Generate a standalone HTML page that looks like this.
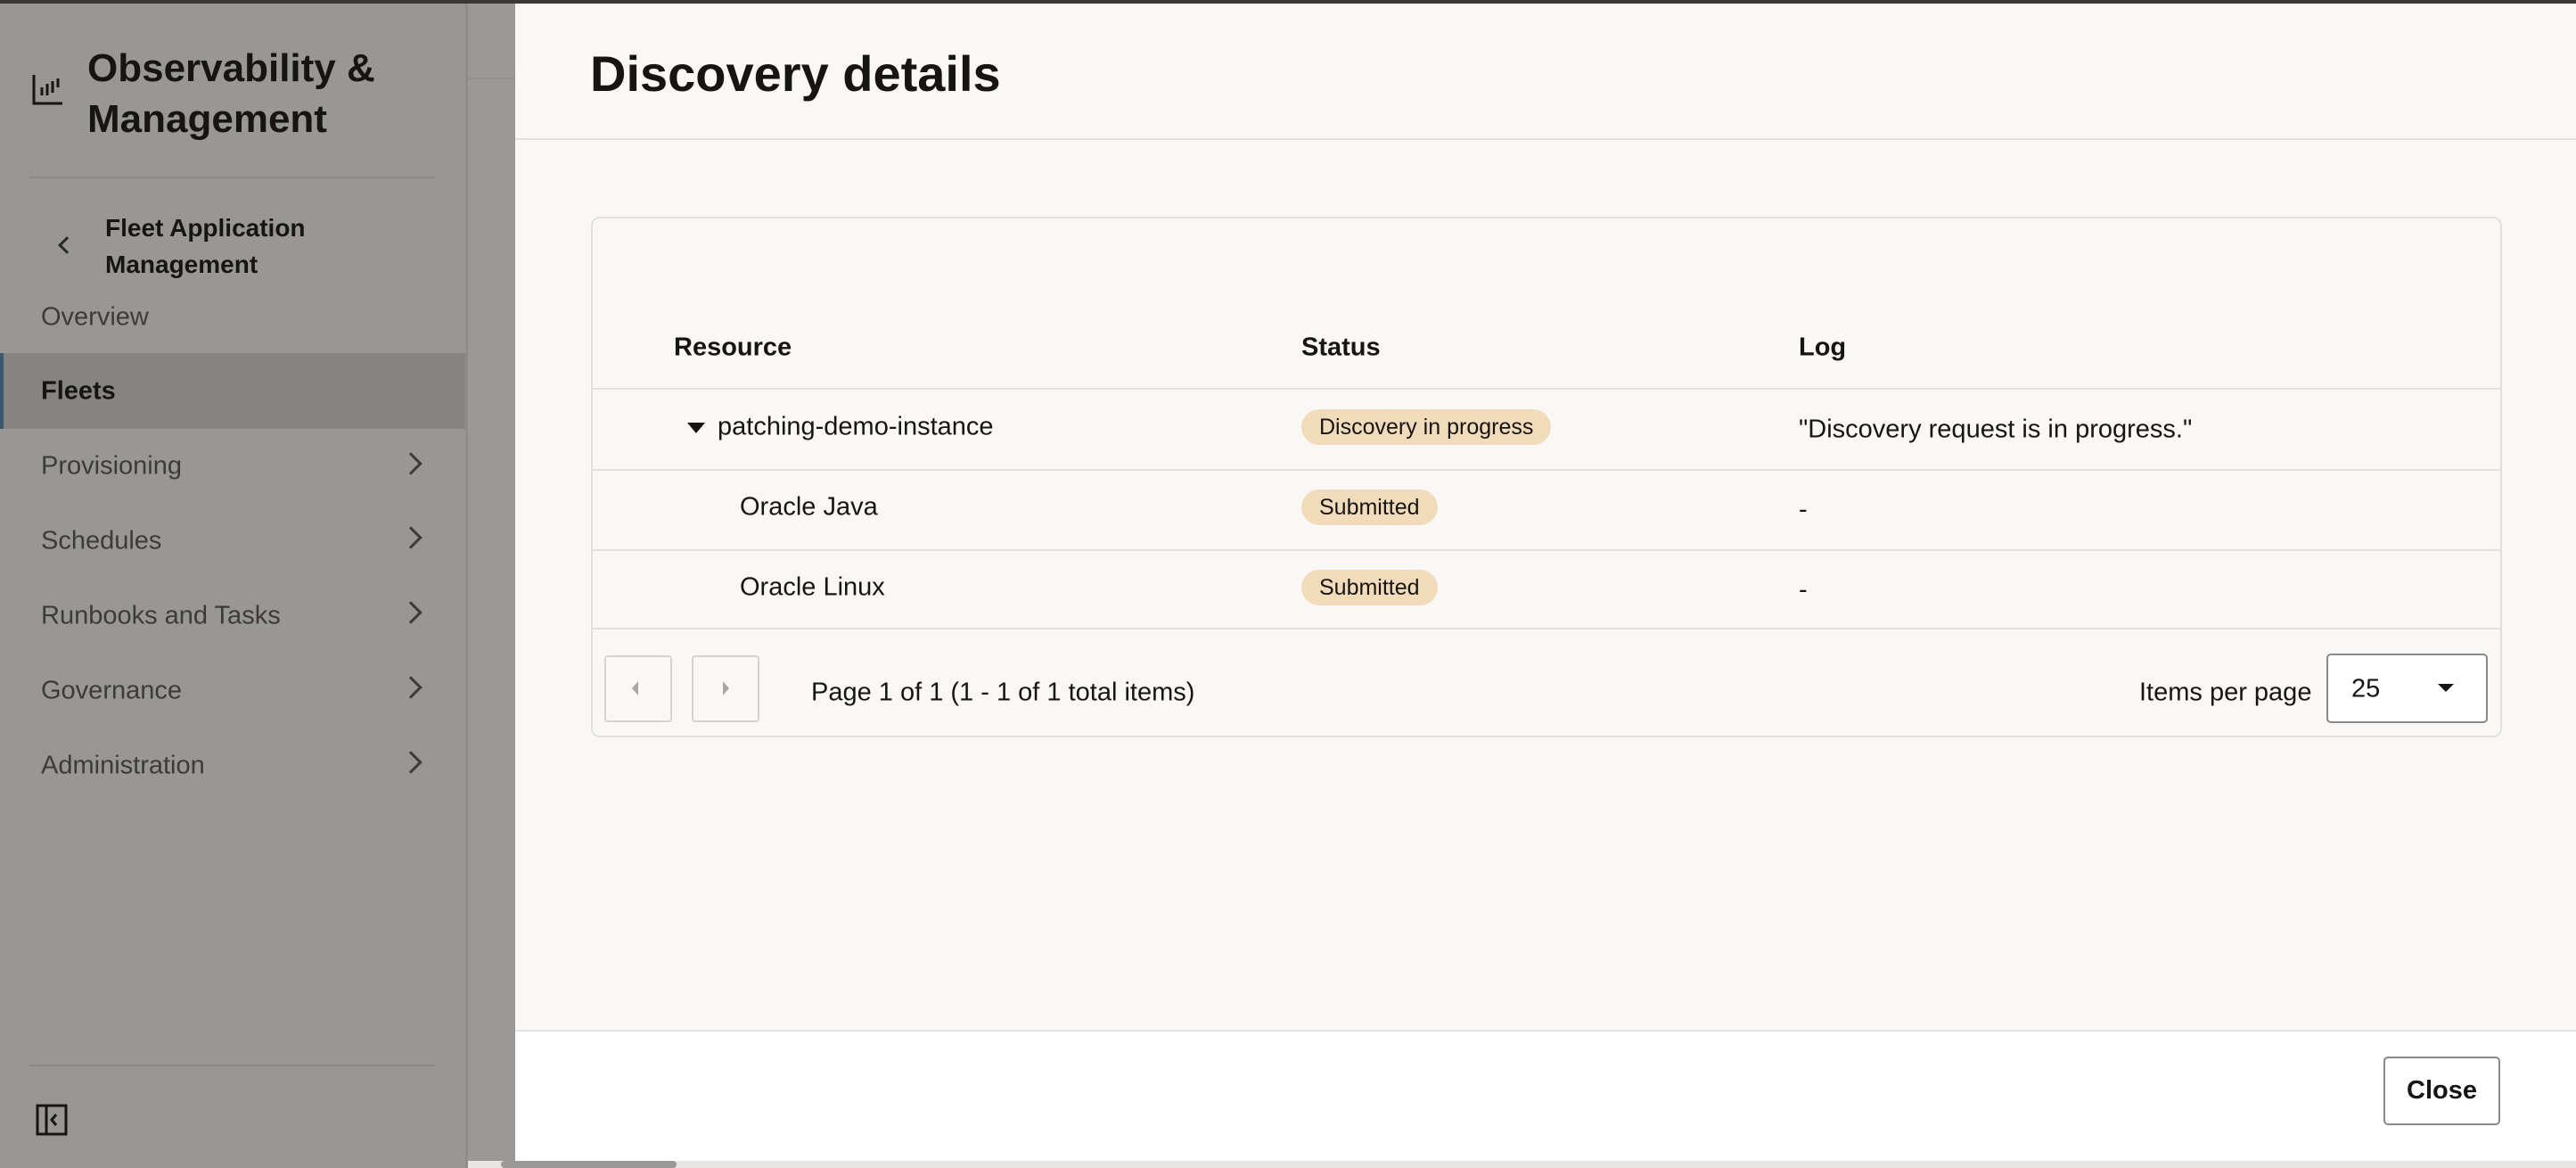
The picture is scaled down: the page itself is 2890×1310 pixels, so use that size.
<!DOCTYPE html>
<html><head><meta charset="utf-8"><style>
*{box-sizing:border-box;margin:0;padding:0}
body{width:2890px;height:1310px;position:relative;overflow:hidden;background:#f9f8f6;font-family:"Liberation Sans",sans-serif;color:#161513}
.a{position:absolute;white-space:nowrap}
.side{left:0;top:0;width:525px;height:1310px;background:#989795;border-right:3px solid #8e8d8b}
.strip{left:525px;top:0;width:53px;height:1310px;background:#9a9997}
.nav{left:46px;font-size:29px;color:#3c3b39;transform:translateY(-50%)}
.chev{left:452px;width:18px;height:18px;border-right:3px solid #3c3b39;border-top:3px solid #3c3b39;transform:translateY(-50%) rotate(45deg)}
.td{font-size:29px;transform:translateY(-50%)}
.badge{background:#f2dbbb;border-radius:20px;height:40px;line-height:40px;padding:0 20px;font-size:25px;transform:translateY(-50%)}
.hl{height:2px;background:#e2e1df;left:663px;width:2144px}
</style></head><body>
<div class="a" style="left:0;top:0;width:2890px;height:4px;background:#3a3935;z-index:5"></div>
<div class="a side"></div>
<div class="a strip"></div>
<div class="a" style="left:525px;top:87px;width:53px;height:2px;background:#8f8e8c"></div>
<!-- sidebar -->
<svg class="a" style="left:36px;top:82px" width="36" height="36" viewBox="0 0 36 36"><path d="M2 2V34H34" fill="none" stroke="#161513" stroke-width="3"/><path d="M11 16v9M17 12v13M23 9v13M29 6v10" stroke="#161513" stroke-width="3"/></svg>
<div class="a" style="left:98px;top:48px;font-size:44px;font-weight:bold;line-height:57px">Observability &amp;<br>Management</div>
<div class="a" style="left:33px;top:198px;width:455px;height:2px;background:#8a8987"></div>
<div class="a" style="left:68px;top:268px;width:14px;height:14px;border-left:3px solid #2a2927;border-bottom:3px solid #2a2927;transform:rotate(45deg)"></div>
<div class="a" style="left:118px;top:235px;font-size:28px;font-weight:bold;line-height:41px">Fleet Application<br>Management</div>
<div class="a nav" style="top:356px">Overview</div>
<div class="a" style="left:0;top:396px;width:522px;height:85px;background:#858482;border-left:4px solid #3a5a70"></div>
<div class="a nav" style="top:439px;font-weight:bold;color:#161513">Fleets</div>
<div class="a nav" style="top:523px">Provisioning</div><div class="a chev" style="top:520px"></div>
<div class="a nav" style="top:607px">Schedules</div><div class="a chev" style="top:603px"></div>
<div class="a nav" style="top:691px">Runbooks and Tasks</div><div class="a chev" style="top:687px"></div>
<div class="a nav" style="top:775px">Governance</div><div class="a chev" style="top:771px"></div>
<div class="a nav" style="top:859px">Administration</div><div class="a chev" style="top:855px"></div>
<div class="a" style="left:33px;top:1194px;width:455px;height:2px;background:#8a8987"></div>
<svg class="a" style="left:40px;top:1238px" width="36" height="36" viewBox="0 0 36 36"><rect x="2" y="2" width="32" height="32" fill="none" stroke="#161513" stroke-width="3"/><path d="M12 2v32" stroke="#161513" stroke-width="3"/><path d="M23 12l-5 6 5 6" fill="none" stroke="#161513" stroke-width="3"/></svg>
<!-- modal -->
<div class="a" style="left:578px;top:0;width:2312px;height:157px;background:#f9f8f6;border-bottom:2px solid #e2e1df"></div>
<div class="a" style="left:662px;top:50px;font-size:56px;font-weight:bold">Discovery details</div>
<div class="a" style="left:663px;top:243px;width:2144px;height:584px;border:2px solid #e2e1df;border-radius:10px"></div>
<div class="a td" style="left:756px;top:390px;font-weight:bold">Resource</div>
<div class="a td" style="left:1460px;top:390px;font-weight:bold">Status</div>
<div class="a td" style="left:2018px;top:390px;font-weight:bold">Log</div>
<div class="a hl" style="top:435px"></div>
<div class="a" style="left:771px;top:474px;width:0;height:0;border-left:10px solid transparent;border-right:10px solid transparent;border-top:12px solid #161513"></div>
<div class="a td" style="left:805px;top:479px">patching-demo-instance</div>
<div class="a badge" style="left:1460px;top:479px">Discovery in progress</div>
<div class="a td" style="left:2018px;top:482px">"Discovery request is in progress."</div>
<div class="a hl" style="top:526px"></div>
<div class="a td" style="left:830px;top:569px">Oracle Java</div>
<div class="a badge" style="left:1460px;top:569px">Submitted</div>
<div class="a td" style="left:2018px;top:572px">-</div>
<div class="a hl" style="top:616px"></div>
<div class="a td" style="left:830px;top:659px">Oracle Linux</div>
<div class="a badge" style="left:1460px;top:659px">Submitted</div>
<div class="a td" style="left:2018px;top:662px">-</div>
<div class="a hl" style="top:704px"></div>
<div class="a" style="left:678px;top:735px;width:76px;height:75px;border:2px solid #d4d3d1;border-radius:4px"></div>
<div class="a" style="left:709px;top:764px;width:0;height:0;border-top:8px solid transparent;border-bottom:8px solid transparent;border-right:7px solid #a8a7a5"></div>
<div class="a" style="left:776px;top:735px;width:76px;height:75px;border:2px solid #d4d3d1;border-radius:4px"></div>
<div class="a" style="left:811px;top:764px;width:0;height:0;border-top:8px solid transparent;border-bottom:8px solid transparent;border-left:7px solid #a8a7a5"></div>
<div class="a td" style="left:910px;top:777px">Page 1 of 1 (1 - 1 of 1 total items)</div>
<div class="a td" style="left:2400px;top:777px">Items per page</div>
<div class="a" style="left:2610px;top:733px;width:181px;height:78px;border:2px solid #8a8987;border-radius:5px;background:#fff"></div>
<div class="a td" style="left:2638px;top:773px">25</div>
<div class="a" style="left:2735px;top:767px;width:0;height:0;border-left:9px solid transparent;border-right:9px solid transparent;border-top:9px solid #161513"></div>
<div class="a" style="left:578px;top:1155px;width:2312px;height:147px;background:#fff;border-top:2px solid #e2e1df"></div>
<div class="a" style="left:2674px;top:1185px;width:131px;height:77px;border:2px solid #8a8987;border-radius:5px;background:#fff;font-size:29px;font-weight:bold;text-align:center;line-height:73px">Close</div>
<div class="a" style="left:525px;top:1302px;width:2365px;height:8px;background:#e6e5e3"></div>
<div class="a" style="left:562px;top:1302px;width:197px;height:8px;background:#9a9997;border-radius:4px"></div>
</body></html>
